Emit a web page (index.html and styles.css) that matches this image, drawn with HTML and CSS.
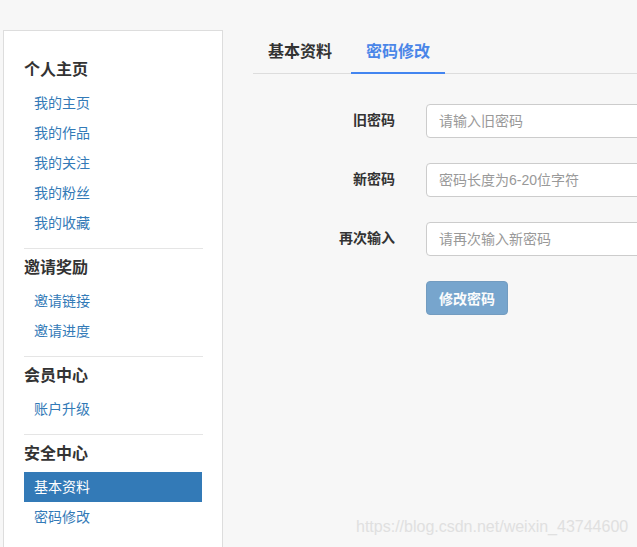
FILE: index.html
```html
<!DOCTYPE html>
<html lang="zh">
<head>
<meta charset="utf-8">
<title>密码修改</title>
<link rel="stylesheet" href="styles.css">
</head>
<body>
<div class="page">
  <aside class="sidebar">
    <div class="section">
      <h3 class="section-title">个人主页</h3>
      <a class="nav-link" href="#">我的主页</a>
      <a class="nav-link" href="#">我的作品</a>
      <a class="nav-link" href="#">我的关注</a>
      <a class="nav-link" href="#">我的粉丝</a>
      <a class="nav-link" href="#">我的收藏</a>
    </div>
    <div class="section">
      <h3 class="section-title">邀请奖励</h3>
      <a class="nav-link" href="#">邀请链接</a>
      <a class="nav-link" href="#">邀请进度</a>
    </div>
    <div class="section">
      <h3 class="section-title">会员中心</h3>
      <a class="nav-link" href="#">账户升级</a>
    </div>
    <div class="section">
      <h3 class="section-title">安全中心</h3>
      <a class="nav-link active" href="#">基本资料</a>
      <a class="nav-link" href="#">密码修改</a>
    </div>
  </aside>
  <main class="main">
    <div class="tabs">
      <a class="tab" href="#">基本资料</a>
      <a class="tab tab-active" href="#">密码修改</a>
    </div>
    <form class="form">
      <label class="form-label">旧密码</label>
      <input class="form-input" type="password" placeholder="请输入旧密码">
      <label class="form-label">新密码</label>
      <input class="form-input" type="password" placeholder="密码长度为6-20位字符">
      <label class="form-label">再次输入</label>
      <input class="form-input" type="password" placeholder="请再次输入新密码">
      <span></span>
      <div><button class="btn" type="button" disabled>修改密码</button></div>
    </form>
  </main>
</div>
<div class="watermark">https://blog.csdn.net/weixin_43744600</div>
</body>
</html>
```
FILE: styles.css
```css
html, body {
  margin: 0;
  padding: 0;
  height: 100%;
  overflow: hidden;
}
body {
  background: #f7f7f7;
  font-family: "Liberation Sans", "Noto Sans CJK SC", sans-serif;
  font-size: 14px;
  color: #333;
  position: relative;
}
.page {
  display: flex;
  align-items: flex-start;
  padding: 30px 0 0 3px;
}
.sidebar {
  flex: 0 0 auto;
  width: 179px;
  background: #fff;
  border: 1px solid #ddd;
  padding: 29px 19px 40px 20px;
}
.section {
  display: flex;
  flex-direction: column;
}
.section + .section {
  border-top: 1px solid #e5e5e5;
  margin-top: 10px;
  padding-top: 9px;
}
.section-title {
  margin: 0 0 8px;
  font-size: 16px;
  line-height: 20px;
  font-weight: bold;
  color: #333;
}
.nav-link {
  display: block;
  height: 30px;
  line-height: 30px;
  padding-left: 10px;
  margin-right: 1px;
  font-size: 14px;
  color: #337ab7;
  text-decoration: none;
}
.nav-link.active {
  background: #337ab7;
  color: #fff;
}
.main {
  flex: 1 1 auto;
  margin-left: 30px;
  min-width: 0;
  overflow: hidden;
}
.tabs {
  display: flex;
  gap: 4px;
  border-bottom: 1px solid #ddd;
}
.tab {
  display: block;
  padding: 12px 15px 10px;
  line-height: 20px;
  font-size: 16px;
  font-weight: bold;
  color: #333;
  text-decoration: none;
  border-bottom: 2px solid transparent;
  margin-bottom: -1px;
}
.tab-active {
  color: #4a86e8;
  border-bottom-color: #4385f0;
}
.form {
  display: grid;
  grid-template-columns: 142px 320px;
  column-gap: 31px;
  row-gap: 25px;
  align-items: center;
  margin-top: 30px;
}
.form-label {
  text-align: right;
  font-size: 14px;
  line-height: 18px;
  font-weight: bold;
  color: #333;
  margin-top: -2px;
}
.form-input {
  box-sizing: border-box;
  height: 34px;
  width: 320px;
  padding: 6px 12px;
  border: 1px solid #ccc;
  border-radius: 4px;
  background: #fff;
  font-family: inherit;
  font-size: 14px;
  color: #555;
}
.form-input::placeholder {
  color: #999;
}
.btn {
  box-sizing: border-box;
  height: 34px;
  padding: 6px 12px;
  border: 1px solid #2e6da4;
  border-radius: 4px;
  background: #337ab7;
  color: #fff;
  font-family: inherit;
  font-size: 14px;
  font-weight: bold;
  opacity: 0.65;
}
.watermark {
  position: absolute;
  left: 356px;
  top: 518px;
  font-family: "Liberation Sans", sans-serif;
  font-size: 16px;
  color: #e0e0e0;
  white-space: nowrap;
}
```
